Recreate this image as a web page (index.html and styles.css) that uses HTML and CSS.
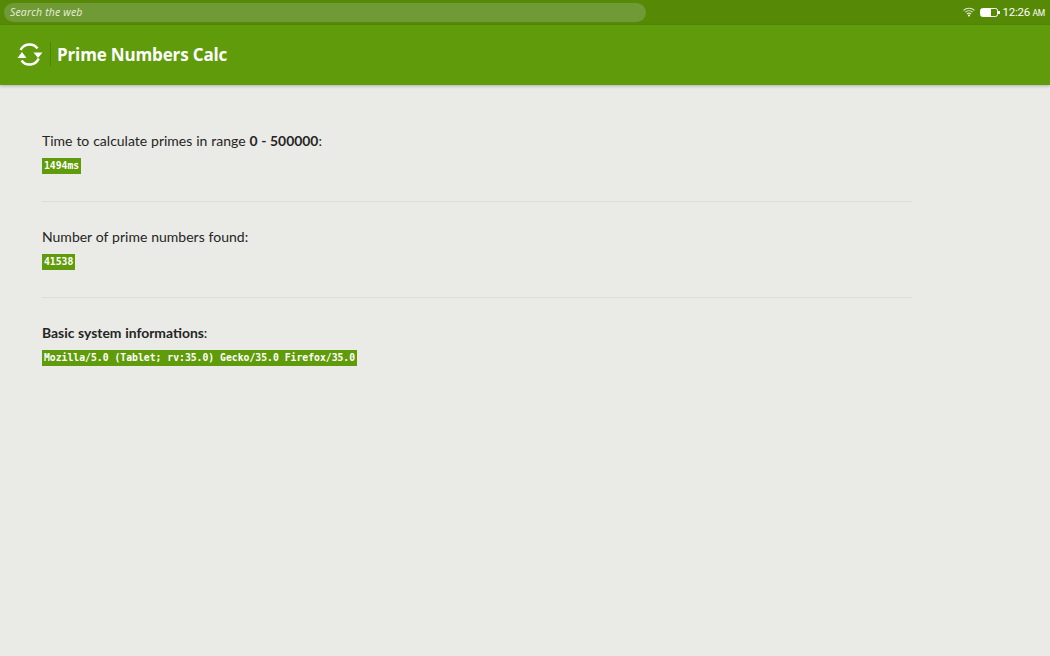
FILE: index.html
```html
<!DOCTYPE html>
<html lang="en">
<head>
<meta charset="utf-8">
<title>Prime Numbers Calc</title>
<link rel="stylesheet" href="styles.css">
</head>
<body>
<div class="status">
  <div class="search">Search the web</div>
  <div class="tray">
    <svg class="wifi" width="12" height="10" viewBox="0 0 12 10"><path d="M.5 3.400C3.600.5 8.400.5 11.500 3.400M2.300 5.200c2.100-1.900 5.300-1.900 7.400 0M4 7c1.200-1 2.800-1 4 0" fill="none" stroke="#dfe9cf" stroke-width="1.100"/><circle cx="6" cy="8.600" r="1" fill="#fff"/></svg>
    <svg class="battery" width="20" height="9" viewBox="0 0 20 9"><rect x=".5" y=".5" width="17" height="8" rx="2" fill="none" stroke="#fff"/><rect x="1" y="1" width="10" height="7" fill="#fff"/><rect x="18" y="3" width="2" height="3" fill="#fff"/></svg>
    <span class="clock">12:26 <small>AM</small></span>
  </div>
</div>
<header class="bar">
  <svg class="refresh" width="26" height="24" viewBox="1 0 26 24"><path d="M4.600 8A10 10 0 0 1 21.500 6.500M22.700 16.500A10 10 0 0 1 5.500 18.500" fill="none" stroke="#fff" stroke-width="2.500"/><path d="M17.500 10.500h9l-4.500 5.500zM1.500 16h9l-4.500-6z" fill="#fff"/></svg>
  <h1 class="title">Prime Numbers Calc</h1>
</header>
<main class="content">
  <section class="block">
    <p class="label">Time to calculate primes in range <b>0 - 500000</b>:</p>
    <code class="tag">1494ms</code>
  </section>
  <section class="block">
    <p class="label">Number of prime numbers found:</p>
    <code class="tag">41538</code>
  </section>
  <section class="block last">
    <p class="label"><b>Basic system informations</b>:</p>
    <code class="tag">Mozilla/5.0 (Tablet; rv:35.0) Gecko/35.0 Firefox/35.0</code>
  </section>
</main>
</body>
</html>
```
FILE: styles.css
```css
* { box-sizing: border-box; }
html, body { margin: 0; height: 100%; overflow: hidden; }
body { background: #eaeae6; font-family: Lato, "Open Sans", sans-serif; color: #252525; }

.status {
  height: 25px;
  background: #568a06;
  display: flex;
  align-items: flex-start;
  justify-content: space-between;
  padding: 3px 5px 0 4px;
}
.search {
  width: 642px;
  height: 19px;
  border-radius: 10px;
  background: #6f9a35;
  color: #e8efdc;
  font-family: "Open Sans", sans-serif;
  font-size: 10.500px;
  font-style: italic;
  line-height: 19px;
  padding-left: 6px;
  letter-spacing: .15px;
}
.tray { display: flex; align-items: center; height: 18px; color: #fff; }
.wifi { margin-right: 5px; }
.battery { margin-right: 3px; }
.clock { font-family: Roboto, sans-serif; font-size: 11.500px; letter-spacing: -.25px; }
.clock small { font-size: 8.500px; }

.bar {
  height: 60px;
  background: #5f9b0a;
  display: flex;
  align-items: center;
  padding: 0 0 2px 17px;
  box-shadow: 0 1px 3px rgba(0,0,0,.25);
}
.refresh { flex: none; }
.title {
  margin: 0 0 0 7px;
  padding: 2px 0 0 6px;
  border-left: 1px solid #4f8507;
  font-family: "Open Sans", sans-serif;
  font-size: 17px;
  line-height: 22px;
  font-weight: 700;
  letter-spacing: -.15px;
  color: #fff;
}

.content { width: 870px; margin-left: 42px; padding-top: 46px; }
.block { border-bottom: 1px solid #dadad6; padding-bottom: 27px; margin-bottom: 25px; }
.last { border-bottom: 0; }
.label { margin: 0; font-size: 14px; line-height: 20px; word-spacing: .3px; }
.label b { font-size: 13.900px; font-weight: 700; }
.tag {
  display: block;
  width: fit-content;
  margin-top: 7px;
  height: 16px;
  line-height: 16px;
  padding: 0 2px;
  background: #5f9b0a;
  color: #fff;
  font-family: "DejaVu Sans Mono", monospace;
  font-size: 9.750px;
  font-weight: 700;
}
```
